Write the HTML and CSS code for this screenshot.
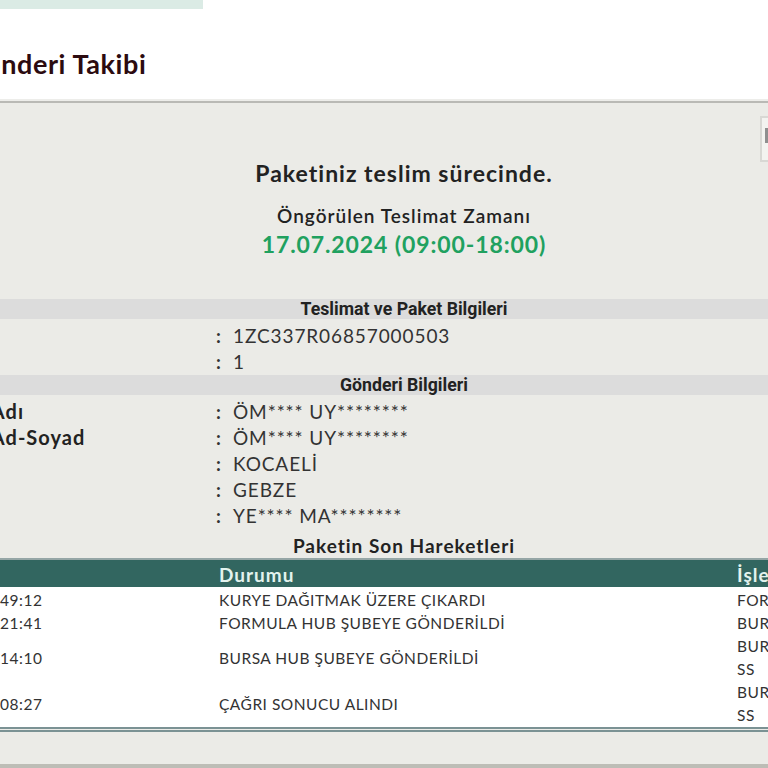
FILE: index.html
```html
<!DOCTYPE html>
<html lang="tr">
<head>
<meta charset="utf-8">
<title>Gönderi Takibi</title>
<link rel="stylesheet" href="styles.css">
</head>
<body>
<div class="page">
  <div class="topbar"></div>
  <h1 class="title">Gönderi Takibi</h1>
  <section class="panel">
    <div class="corner-box"><div class="corner-inner"></div></div>
    <div class="status">
      <p class="status-main">Paketiniz teslim sürecinde.</p>
      <p class="status-sub">Öngörülen Teslimat Zamanı</p>
      <p class="status-date">17.07.2024 (09:00-18:00)</p>
    </div>
    <div class="band">Teslimat ve Paket Bilgileri</div>
    <div class="info">
      <div class="row"><span class="label">No</span><span class="colon">:</span><span class="value">1ZC337R06857000503</span></div>
      <div class="row"><span class="label">Adet</span><span class="colon">:</span><span class="value">1</span></div>
    </div>
    <div class="band">Gönderi Bilgileri</div>
    <div class="info">
      <div class="row"><span class="label">Alıcı Adı</span><span class="colon">:</span><span class="value">ÖM**** UY********</span></div>
      <div class="row"><span class="label">Alıcı Ad-Soyad</span><span class="colon">:</span><span class="value">ÖM**** UY********</span></div>
      <div class="row"><span class="label">İl</span><span class="colon">:</span><span class="value">KOCAELİ</span></div>
      <div class="row"><span class="label">İlçe</span><span class="colon">:</span><span class="value">GEBZE</span></div>
      <div class="row"><span class="label">Alan</span><span class="colon">:</span><span class="value">YE**** MA********</span></div>
    </div>
    <h2 class="moves-title">Paketin Son Hareketleri</h2>
    <div class="table-wrap">
      <table class="moves">
        <thead>
          <tr><th class="c1">Tarih</th><th class="c2">Durumu</th><th class="c3">İşlem Yeri</th></tr>
        </thead>
        <tbody>
          <tr class="r1"><td class="c1">16.07.2024 08:49:12</td><td class="c2">KURYE DAĞITMAK ÜZERE ÇIKARDI</td><td class="c3">FORMULA HUB</td></tr>
          <tr><td class="c1">16.07.2024 02:21:41</td><td class="c2">FORMULA HUB ŞUBEYE GÖNDERİLDİ</td><td class="c3">BURSA HUB</td></tr>
          <tr><td class="c1">15.07.2024 22:14:10</td><td class="c2">BURSA HUB ŞUBEYE GÖNDERİLDİ</td><td class="c3">BURSA HUB<br>SS</td></tr>
          <tr><td class="c1">15.07.2024 19:08:27</td><td class="c2">ÇAĞRI SONUCU ALINDI</td><td class="c3">BURSA HUB<br>SS</td></tr>
        </tbody>
      </table>
    </div>
  </section>
</div>
</body>
</html>
```

FILE: styles.css
```css
html, body {
  margin: 0;
  padding: 0;
}
body {
  width: 768px;
  height: 768px;
  overflow: hidden;
  background: #ffffff;
  font-family: "Lato", "Open Sans", sans-serif;
  color: #333333;
}
.page {
  margin-left: -200px;
  width: 1208px;
}
.topbar {
  width: 403px;
  height: 9px;
  background: #dbebe5;
}
.title {
  margin: 39px 0 0;
  padding-left: 165px;
  font-size: 27px;
  line-height: 32px;
  font-weight: 700;
  letter-spacing: 0.6px;
  color: #2c0b10;
}
.panel {
  position: relative;
  margin-top: 21px;
  background: #ebebe7;
  border-top: 2px solid #b9b9b5;
  border-bottom: 5px solid #bdbdb6;
  box-shadow: 0 -2px 0 #ededea;
  padding: 56px 0 32px;
}
.corner-box {
  position: absolute;
  left: 960px;
  top: 13px;
  width: 40px;
  height: 42px;
  border: 2px solid #d8d8d4;
  background: #f3f3f0;
}
.corner-inner {
  margin: 10px 0 0 3px;
  width: 20px;
  height: 15px;
  background: #8f8f8f;
}
.status {
  text-align: center;
}
.status p {
  margin: 0;
}
.status-main {
  font-size: 23px;
  line-height: 28px;
  font-weight: 700;
  letter-spacing: 1px;
  color: #222222;
}
.status .status-sub {
  margin-top: 17px;
  font-size: 19px;
  line-height: 24px;
  font-weight: 600;
  letter-spacing: 1px;
  color: #222222;
}
.status .status-date {
  margin-top: 3px;
  font-size: 23px;
  line-height: 27px;
  font-weight: 700;
  letter-spacing: 0.9px;
  color: #20a15f;
}
.band {
  margin-top: 41px;
  height: 20px;
  background: #dcdcdc;
  text-align: center;
  font-family: "Roboto", sans-serif;
  font-weight: 700;
  font-size: 17.7px;
  line-height: 20px;
  color: #222222;
}
.info + .band {
  margin-top: 0;
}
.info {
  padding: 2px 0;
}
.row {
  display: flex;
  box-sizing: border-box;
  height: 26px;
  padding-top: 3px;
  line-height: 23px;
  font-size: 19px;
  white-space: nowrap;
}
.label {
  width: 274px;
  padding-left: 142px;
  font-size: 20px;
  font-weight: 700;
  letter-spacing: 1px;
  color: #222222;
}
.colon {
  width: 17px;
  font-weight: 700;
  color: #333333;
}
.value {
  letter-spacing: 0.9px;
  color: #333333;
}
.moves-title {
  margin: 5px 0 0;
  text-align: center;
  font-size: 19px;
  line-height: 24px;
  font-weight: 700;
  letter-spacing: 1px;
  color: #222222;
}
.table-wrap {
  border-top: 2px solid #95a6a6;
  border-bottom: 5px double #7b9294;
}
.moves {
  width: 100%;
  border-collapse: collapse;
  table-layout: fixed;
  background: #ffffff;
}
.moves th {
  box-sizing: border-box;
  height: 27px;
  padding: 3px 0 0;
  background: #326660;
  color: #e3f3ee;
  font-size: 19px;
  line-height: 24px;
  font-weight: 700;
  letter-spacing: 1px;
  text-align: left;
  white-space: nowrap;
  overflow: hidden;
}
.moves td {
  padding: 0;
  font-size: 15.5px;
  line-height: 23px;
  letter-spacing: 0.5px;
  vertical-align: middle;
  white-space: nowrap;
  overflow: hidden;
  color: #333333;
}
.moves .r1 td {
  padding-top: 2px;
}
.moves .c1 {
  width: 419px;
  padding-left: 88px;
  box-sizing: border-box;
}
.moves .c2 {
  width: 518px;
}
```
